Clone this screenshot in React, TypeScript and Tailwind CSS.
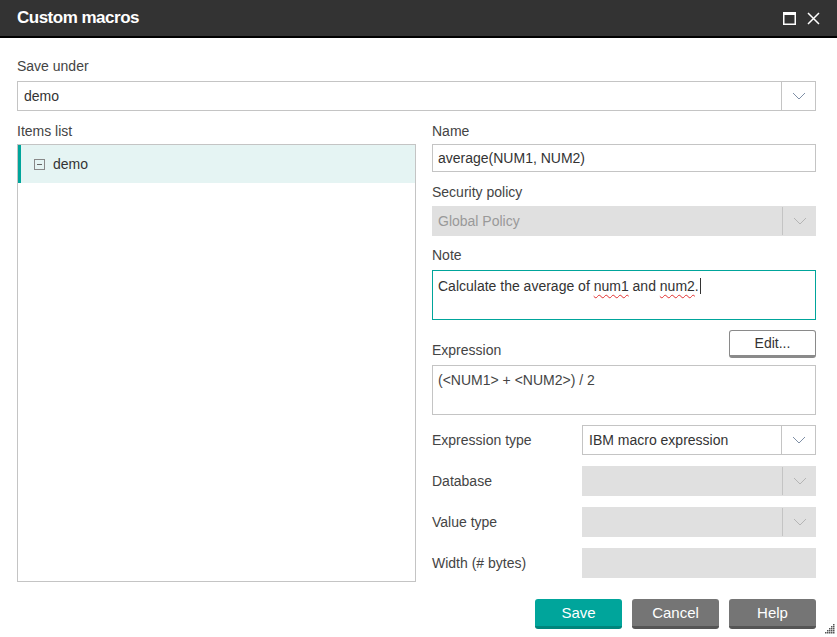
import React from "react";

const font = { fontFamily: '"Liberation Sans", Arial, sans-serif' };

function Chevron({ muted }: { muted?: boolean }) {
  return (
    <svg width="14" height="8" viewBox="0 0 14 8" fill="none">
      <path d="M1 1l6 6 6-6" stroke={muted ? "#b5b5b5" : "#7f8fa6"} strokeWidth="1" />
    </svg>
  );
}

function Select({ value, disabled, className }: { value?: string; disabled?: boolean; className?: string }) {
  return (
    <div
      className={
        "flex h-[30px] items-stretch " +
        (disabled ? "bg-[#e0e0e0] text-[#999]" : "border border-[#c4c4c4] bg-white text-[#333]") +
        " " +
        (className ?? "")
      }
    >
      <div className="flex flex-1 items-center px-[6px] text-[14px]">{value}</div>
      <div className={"flex w-[34px] items-center justify-center border-l " + (disabled ? "my-[1px] border-[#c4c4c4]" : "border-[#c4c4c4]")}>
        <Chevron muted={disabled} />
      </div>
    </div>
  );
}

function Label({ children, className }: { children: React.ReactNode; className?: string }) {
  return <div className={"text-[14px] leading-[16px] text-[#444] " + (className ?? "")}>{children}</div>;
}

function Row({ label, children }: { label: string; children: React.ReactNode }) {
  return (
    <div className="flex items-center">
      <div className="w-[150px] text-[14px] text-[#444]">{label}</div>
      <div className="flex-1">{children}</div>
    </div>
  );
}

function Btn({ children, teal }: { children: React.ReactNode; teal?: boolean }) {
  return (
    <button
      className={
        "h-[30px] w-[87px] rounded-[3px] border-b-[3px] pt-[2px] text-[15px] text-white " +
        (teal ? "border-[#00857c] bg-[#00a59b]" : "border-[#555] bg-[#757575]")
      }
    >
      {children}
    </button>
  );
}

export default function App() {
  return (
    <div style={font} className="relative h-[637px] w-[837px] overflow-hidden bg-white">
      {/* Title bar */}
      <div className="flex h-[38px] items-center justify-between border-b-2 border-black bg-[#333] pl-[17px] pr-[17px]">
        <div className="text-[17px] font-bold tracking-[-0.5px] text-white">Custom macros</div>
        <div className="flex items-center gap-[11px]">
          <svg width="13" height="13" viewBox="0 0 13 13" fill="none">
            <rect x="0.75" y="0.75" width="11.5" height="11.5" stroke="white" strokeWidth="1.5" />
            <rect x="0.5" y="0.5" width="12" height="2.5" fill="white" />
          </svg>
          <svg width="13" height="13" viewBox="0 0 13 13" fill="none">
            <path d="M1 1l11 11M12 1L1 12" stroke="white" strokeWidth="1.5" />
          </svg>
        </div>
      </div>

      <div className="pl-[17px] pr-[21px] pt-[20px]">
        <Label>Save under</Label>
        <Select value="demo" className="mt-[7px]" />

        <div className="mt-[12px] flex gap-[16px]">
          {/* Left column */}
          <div className="w-[399px]">
            <Label>Items list</Label>
            <div className="mt-[5px] h-[438px] border border-[#c4c4c4]">
              <div className="flex h-[38px] items-center gap-[8px] border-l-[3px] border-[#00a59b] bg-[#e5f4f3] pl-[13px] text-[14px] text-[#333]">
                <div className="flex h-[11px] w-[11px] items-center justify-center border border-[#888]">
                  <div className="h-[1px] w-[5px] bg-[#666]" />
                </div>
                <span>demo</span>
              </div>
            </div>
          </div>

          {/* Right column */}
          <div className="flex-1">
            <Label>Name</Label>
            <div className="mt-[5px] flex h-[28px] items-center border border-[#c4c4c4] px-[5px] text-[14px] text-[#333]">
              average(NUM1, NUM2)
            </div>

            <Label className="mt-[12px]">Security policy</Label>
            <Select value="Global Policy" disabled className="mt-[6px]" />

            <Label className="mt-[11px]">Note</Label>
            <div className="mt-[7px] h-[50px] border border-[#00a59b] px-[5px] pt-[4px] text-[14px] text-[#333]">
              Calculate the average of{" "}
              <span className="underline decoration-[#e03030] decoration-wavy decoration-1 underline-offset-[3px]">num1</span> and{" "}
              <span className="underline decoration-[#e03030] decoration-wavy decoration-1 underline-offset-[3px]">num2</span>.
              <span className="ml-[1px] inline-block h-[16px] w-[1px] translate-y-[3px] bg-[#333]" />
            </div>

            <div className="mt-[10px] flex items-end justify-between">
              <Label>Expression</Label>
              <button className="h-[28px] w-[87px] rounded-[3px] border border-b-[3px] border-[#8a8a8a] bg-white text-[14px] text-[#333]">
                Edit...
              </button>
            </div>
            <div className="mt-[7px] h-[50px] border border-[#c4c4c4] px-[5px] pt-[4px] text-[14px] text-[#444]">
              (&lt;NUM1&gt; + &lt;NUM2&gt;) / 2
            </div>

            <div className="mt-[10px] flex flex-col gap-[11px]">
              <Row label="Expression type">
                <Select value="IBM macro expression" />
              </Row>
              <Row label="Database">
                <Select disabled />
              </Row>
              <Row label="Value type">
                <Select disabled />
              </Row>
              <Row label="Width (# bytes)">
                <div className="h-[30px] bg-[#e0e0e0]" />
              </Row>
            </div>
          </div>
        </div>

        <div className="mt-[17px] flex justify-end gap-[10px]">
          <Btn teal>Save</Btn>
          <Btn>Cancel</Btn>
          <Btn>Help</Btn>
        </div>
      </div>

      {/* resize grip */}
      <svg className="absolute bottom-[3px] right-[2px]" width="10" height="10" viewBox="0 0 10 10">
        {[
          [8, 0], [6, 2], [8, 2], [4, 4], [6, 4], [8, 4], [2, 6], [4, 6], [6, 6], [8, 6], [0, 8], [2, 8], [4, 8], [6, 8], [8, 8],
        ].map(([x, y], i) => (
          <rect key={i} x={x} y={y} width="1.5" height="1.5" fill="#555" />
        ))}
      </svg>
    </div>
  );
}
